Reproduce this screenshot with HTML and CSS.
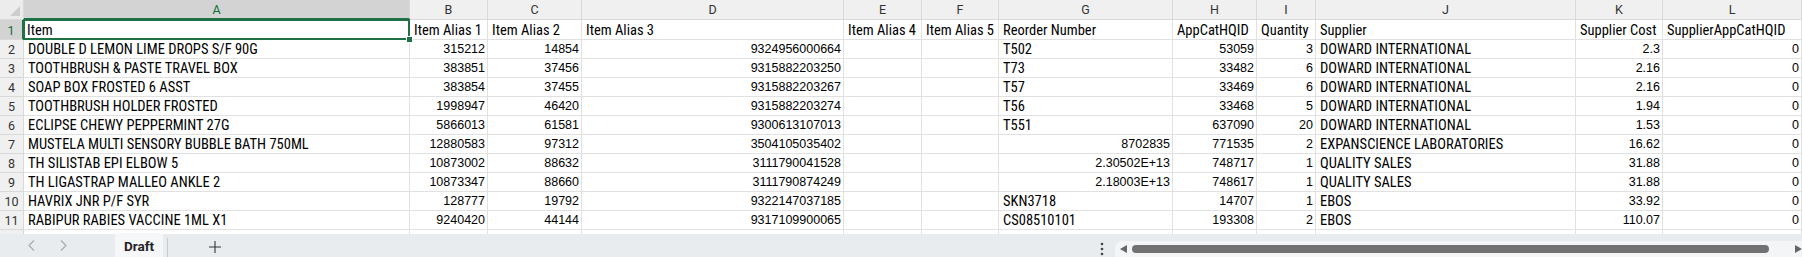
FILE: index.html
```html
<!DOCTYPE html>
<html lang="en">
<head>
  <meta charset="UTF-8" />
  <title>Draft</title>
  <link rel="stylesheet" href="styles.css">
</head>
<body>
  <div class="sheet">
    <div class="row head">
      <div class="corner"><span class="tri"></span></div>
      <div class="col sel">A</div><div class="col">B</div><div class="col">C</div><div class="col">D</div>
      <div class="col">E</div><div class="col">F</div><div class="col">G</div><div class="col">H</div>
      <div class="col">I</div><div class="col">J</div><div class="col">K</div><div class="col">L</div>
    </div>

    <div class="row first">
      <div class="rn sel">1</div>
      <div class="c active">Item<span class="handle"></span></div>
      <div class="c">Item Alias 1</div><div class="c">Item Alias 2</div><div class="c">Item Alias 3</div>
      <div class="c">Item Alias 4</div><div class="c">Item Alias 5</div><div class="c">Reorder Number</div>
      <div class="c">AppCatHQID</div><div class="c">Quantity</div><div class="c">Supplier</div>
      <div class="c">Supplier Cost</div><div class="c">SupplierAppCatHQID</div>
    </div>

    <div class="row">
      <div class="rn">2</div><div class="c">DOUBLE D LEMON LIME DROPS S/F 90G</div>
      <div class="c n">315212</div><div class="c n">14854</div><div class="c n">9324956000664</div>
      <div class="c"></div><div class="c"></div><div class="c">T502</div><div class="c n">53059</div>
      <div class="c n">3</div><div class="c">DOWARD INTERNATIONAL</div><div class="c n">2.3</div><div class="c n">0</div>
    </div>
    <div class="row">
      <div class="rn">3</div><div class="c">TOOTHBRUSH &amp; PASTE TRAVEL BOX</div>
      <div class="c n">383851</div><div class="c n">37456</div><div class="c n">9315882203250</div>
      <div class="c"></div><div class="c"></div><div class="c">T73</div><div class="c n">33482</div>
      <div class="c n">6</div><div class="c">DOWARD INTERNATIONAL</div><div class="c n">2.16</div><div class="c n">0</div>
    </div>
    <div class="row">
      <div class="rn">4</div><div class="c">SOAP BOX FROSTED 6 ASST</div>
      <div class="c n">383854</div><div class="c n">37455</div><div class="c n">9315882203267</div>
      <div class="c"></div><div class="c"></div><div class="c">T57</div><div class="c n">33469</div>
      <div class="c n">6</div><div class="c">DOWARD INTERNATIONAL</div><div class="c n">2.16</div><div class="c n">0</div>
    </div>
    <div class="row">
      <div class="rn">5</div><div class="c">TOOTHBRUSH HOLDER FROSTED</div>
      <div class="c n">1998947</div><div class="c n">46420</div><div class="c n">9315882203274</div>
      <div class="c"></div><div class="c"></div><div class="c">T56</div><div class="c n">33468</div>
      <div class="c n">5</div><div class="c">DOWARD INTERNATIONAL</div><div class="c n">1.94</div><div class="c n">0</div>
    </div>
    <div class="row">
      <div class="rn">6</div><div class="c">ECLIPSE CHEWY PEPPERMINT 27G</div>
      <div class="c n">5866013</div><div class="c n">61581</div><div class="c n">9300613107013</div>
      <div class="c"></div><div class="c"></div><div class="c">T551</div><div class="c n">637090</div>
      <div class="c n">20</div><div class="c">DOWARD INTERNATIONAL</div><div class="c n">1.53</div><div class="c n">0</div>
    </div>
    <div class="row">
      <div class="rn">7</div><div class="c">MUSTELA MULTI SENSORY BUBBLE BATH 750ML</div>
      <div class="c n">12880583</div><div class="c n">97312</div><div class="c n">3504105035402</div>
      <div class="c"></div><div class="c"></div><div class="c n">8702835</div><div class="c n">771535</div>
      <div class="c n">2</div><div class="c">EXPANSCIENCE LABORATORIES</div><div class="c n">16.62</div><div class="c n">0</div>
    </div>
    <div class="row">
      <div class="rn">8</div><div class="c">TH SILISTAB EPI ELBOW 5</div>
      <div class="c n">10873002</div><div class="c n">88632</div><div class="c n">3111790041528</div>
      <div class="c"></div><div class="c"></div><div class="c n">2.30502E+13</div><div class="c n">748717</div>
      <div class="c n">1</div><div class="c">QUALITY SALES</div><div class="c n">31.88</div><div class="c n">0</div>
    </div>
    <div class="row">
      <div class="rn">9</div><div class="c">TH LIGASTRAP MALLEO ANKLE 2</div>
      <div class="c n">10873347</div><div class="c n">88660</div><div class="c n">3111790874249</div>
      <div class="c"></div><div class="c"></div><div class="c n">2.18003E+13</div><div class="c n">748617</div>
      <div class="c n">1</div><div class="c">QUALITY SALES</div><div class="c n">31.88</div><div class="c n">0</div>
    </div>
    <div class="row">
      <div class="rn">10</div><div class="c">HAVRIX JNR P/F SYR</div>
      <div class="c n">128777</div><div class="c n">19792</div><div class="c n">9322147037185</div>
      <div class="c"></div><div class="c"></div><div class="c">SKN3718</div><div class="c n">14707</div>
      <div class="c n">1</div><div class="c">EBOS</div><div class="c n">33.92</div><div class="c n">0</div>
    </div>
    <div class="row">
      <div class="rn">11</div><div class="c">RABIPUR RABIES VACCINE 1ML X1</div>
      <div class="c n">9240420</div><div class="c n">44144</div><div class="c n">9317109900065</div>
      <div class="c"></div><div class="c"></div><div class="c">CS08510101</div><div class="c n">193308</div>
      <div class="c n">2</div><div class="c">EBOS</div><div class="c n">110.07</div><div class="c n">0</div>
    </div>
    <div class="row">
      <div class="rn"></div><div class="c"></div><div class="c"></div><div class="c"></div><div class="c"></div>
      <div class="c"></div><div class="c"></div><div class="c"></div><div class="c"></div>
      <div class="c"></div><div class="c"></div><div class="c"></div><div class="c"></div>
    </div>
  </div>

  <div class="tabbar">
    <div class="nav">
      <svg width="7" height="11" viewBox="0 0 7 11"><path d="M6 0.5 L1 5.5 L6 10.5" fill="none" stroke="#a8a8a8" stroke-width="1.1"/></svg>
      <svg width="7" height="11" viewBox="0 0 7 11"><path d="M1 0.5 L6 5.5 L1 10.5" fill="none" stroke="#a8a8a8" stroke-width="1.1"/></svg>
    </div>
    <div class="tab">Draft</div>
    <div class="sep"></div>
    <div class="add">
      <svg width="12" height="12" viewBox="0 0 12 12"><path d="M6 0 V12 M0 6 H12" stroke="#333" stroke-width="1.1"/></svg>
    </div>
    <div class="more">
      <svg width="4" height="14" viewBox="0 0 4 14"><circle cx="2" cy="2" r="1.3" fill="#444"/><circle cx="2" cy="7" r="1.3" fill="#444"/><circle cx="2" cy="12" r="1.3" fill="#444"/></svg>
    </div>
    <div class="hscroll">
      <svg width="7" height="8" viewBox="0 0 7 8"><path d="M7 0 L0 4 L7 8 Z" fill="#666"/></svg>
      <div class="thumb"></div>
      <svg class="right" width="7" height="8" viewBox="0 0 7 8"><path d="M0 0 L7 4 L0 8 Z" fill="#666"/></svg>
    </div>
  </div>
</body>
</html>
```
FILE: styles.css
```css
body {
  margin: 0;
  overflow: hidden;
  background: #fff;
  font-family: "Roboto Condensed", "Liberation Sans", sans-serif;
  color: #000;
}

.sheet {
  height: 234px;
  overflow: hidden;
}

.row {
  display: grid;
  grid-template-columns: 24px 386px 78px 94px 262px 78px 77px 174px 84px 59px 260px 87px 139px;
  height: 19px;
}

.row.head { height: 20px; }
.row.first { height: 20px; }

/* column letters */
.corner,
.col,
.rn {
  box-sizing: border-box;
  background: #f0f0f0;
  border-right: 1px solid #d9d9d9;
  border-bottom: 1px solid #d9d9d9;
  font-family: "Roboto", "Liberation Sans", sans-serif;
  font-size: 12.5px;
  color: #333;
  display: flex;
  align-items: center;
  justify-content: center;
}

.corner {
  position: relative;
  background: #ececec;
}

.tri {
  position: absolute;
  right: 3px;
  bottom: 3px;
  width: 0;
  height: 0;
  border-left: 10px solid transparent;
  border-bottom: 10px solid #cdcdcd;
}

.col.sel,
.rn.sel {
  background: #d3d3d3;
  color: #116d3b;
}

.col.sel { border-bottom: 2px solid #1e7145; }
.rn.sel { border-right: 2px solid #1e7145; }

.rn { padding-top: 1px; }

/* cells */
.c {
  box-sizing: border-box;
  border-right: 1px solid #e1e1e1;
  border-bottom: 1px solid #e1e1e1;
  padding: 0 3px 0 4px;
  font-size: 14.5px;
  line-height: 17px;
  white-space: nowrap;
  overflow: hidden;
  display: flex;
  align-items: flex-end;
}

.c.n {
  justify-content: flex-end;
  padding-right: 2px;
  font-family: "Liberation Sans", sans-serif;
  font-size: 12.5px;
}

.c.active {
  position: relative;
  overflow: visible;
  padding-left: 3px;
}

.c.active::before {
  content: "";
  position: absolute;
  top: -1px;
  left: -1px;
  right: -1px;
  bottom: -1px;
  border: 2px solid #1e7145;
  pointer-events: none;
}

.handle {
  position: absolute;
  right: -4px;
  bottom: -4px;
  width: 5px;
  height: 5px;
  background: #1e7145;
  border: 1px solid #fff;
  z-index: 2;
}

/* sheet tabs */
.tabbar {
  height: 23px;
  display: flex;
  align-items: stretch;
  background: #e9ecee;
}

.nav {
  width: 115px;
  box-sizing: border-box;
  padding-left: 28px;
  display: flex;
  align-items: center;
  gap: 25px;
}

.tab {
  width: 48px;
  background: #f6f7f8;
  border-radius: 4px 4px 0 0;
  margin-top: -1px;
  font-family: "Roboto", "Liberation Sans", sans-serif;
  font-weight: bold;
  font-size: 13.5px;
  color: #242424;
  display: flex;
  align-items: center;
  justify-content: center;
  padding-top: 2px;
}

.sep {
  width: 1px;
  margin: 4px 0 0 4px;
  background: #c8cbcd;
}

.add {
  margin-left: 41px;
  display: flex;
  align-items: center;
  padding-top: 3px;
}

.more {
  margin-left: auto;
  margin-right: 11px;
  display: flex;
  align-items: center;
  padding-top: 7px;
}

.hscroll {
  width: 687px;
  margin-top: 7px;
  background: #f4f5f6;
  border-radius: 8px 0 0 0;
  box-sizing: border-box;
  padding-left: 5px;
  display: flex;
  align-items: center;
  gap: 5px;
}

.thumb {
  width: 637px;
  height: 8px;
  border-radius: 4px;
  background: #727272;
}

.hscroll .right { margin-left: 21px; }
```
